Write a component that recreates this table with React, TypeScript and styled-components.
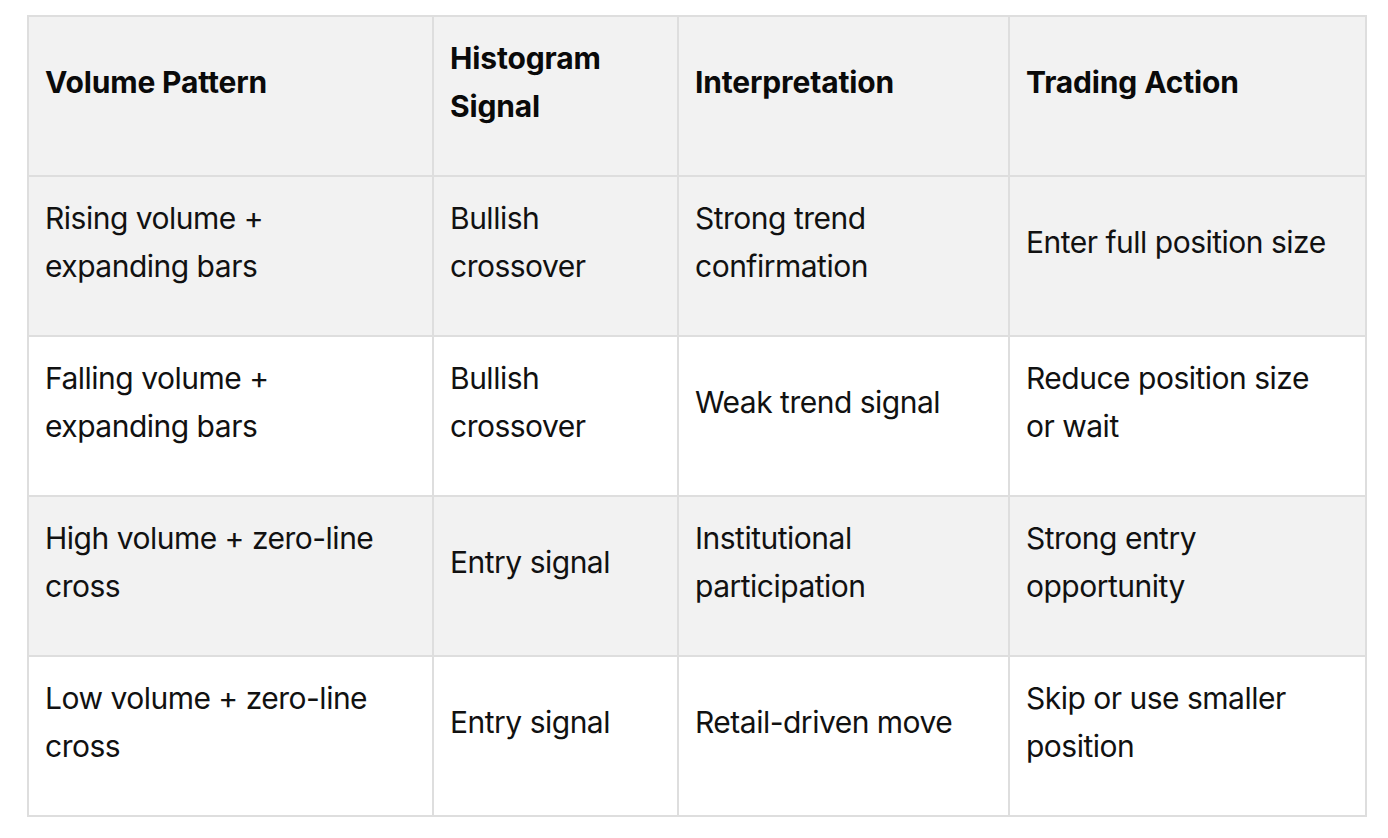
import React from "react";
import styled, { createGlobalStyle } from "styled-components";

const GlobalStyle = createGlobalStyle`
  html, body {
    margin: 0;
    padding: 0;
    background: #ffffff;
  }
  body {
    font-family: Inter, "Noto Sans", "Liberation Sans", sans-serif;
    color: #0d0d0d;
  }
`;

const Page = styled.div`
  padding: 15px 21px 21px 27px;
`;

const Table = styled.table`
  border-collapse: separate;
  border-spacing: 0;
  table-layout: fixed;
  width: 1340px;
  border-top: 2px solid #dedede;
  border-left: 2px solid #dedede;
  font-size: 30px;
  line-height: 48px;
`;

const Row = styled.tr<{ $shaded: boolean }>`
  background: ${(p) => (p.$shaded ? "#f2f2f2" : "#ffffff")};
`;

const HeadCell = styled.th<{ $w: number }>`
  box-sizing: border-box;
  width: ${(p) => p.$w}px;
  padding: 17px 24px 45px 16px;
  border-right: 2px solid #dedede;
  border-bottom: 2px solid #dedede;
  text-align: left;
  vertical-align: middle;
  font-weight: 700;
  letter-spacing: -0.15px;
  color: #0a0a0a;
`;

const Cell = styled.td`
  box-sizing: border-box;
  padding: 17px 24px 45px 16px;
  border-right: 2px solid #dedede;
  border-bottom: 2px solid #dedede;
  vertical-align: middle;
  font-weight: 400;
  letter-spacing: -0.5px;
  color: #111111;
`;

const columns = [
  { title: "Volume Pattern", w: 405 },
  { title: "Histogram Signal", w: 245 },
  { title: "Interpretation", w: 331 },
  { title: "Trading Action", w: 357 },
];

const rows = [
  ["Rising volume + expanding bars", "Bullish crossover", "Strong trend confirmation", "Enter full position size"],
  ["Falling volume + expanding bars", "Bullish crossover", "Weak trend signal", "Reduce position size or wait"],
  ["High volume + zero-line cross", "Entry signal", "Institutional participation", "Strong entry opportunity"],
  ["Low volume + zero-line cross", "Entry signal", "Retail-driven move", "Skip or use smaller position"],
];

export default function App() {
  return (
    <>
      <GlobalStyle />
      <Page>
        <Table>
          <thead>
            <Row $shaded>
              {columns.map((c) => (
                <HeadCell key={c.title} $w={c.w}>
                  {c.title}
                </HeadCell>
              ))}
            </Row>
          </thead>
          <tbody>
            {rows.map((r, i) => (
              <Row key={i} $shaded={i % 2 === 0}>
                {r.map((t, j) => (
                  <Cell key={j}>{t}</Cell>
                ))}
              </Row>
            ))}
          </tbody>
        </Table>
      </Page>
    </>
  );
}
